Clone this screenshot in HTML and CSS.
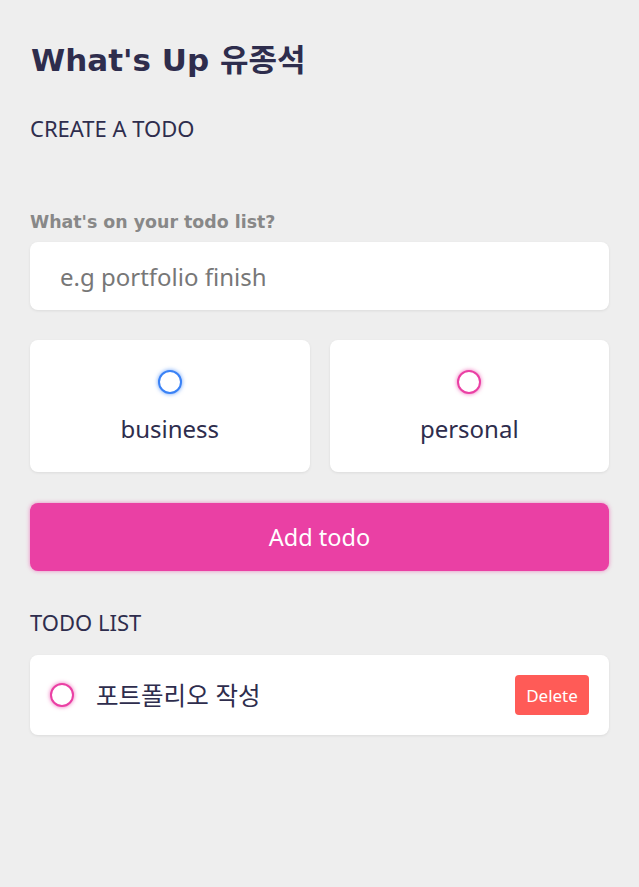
FILE: index.html
```html
<!DOCTYPE html>
<html lang="ko">
<head>
<meta charset="utf-8">
<title>What's Up</title>
<link rel="stylesheet" href="styles.css">
</head>
<body>
<main class="app">
  <h1 class="greeting">What's Up 유종석</h1>

  <section class="create">
    <h3 class="section-title">CREATE A TODO</h3>
    <form class="todo-form" onsubmit="return false">
      <label class="field-label" for="content">What's on your todo list?</label>
      <input class="todo-input" id="content" type="text" placeholder="e.g portfolio finish">

      <div class="options">
        <label class="option">
          <span class="bubble bubble-business"></span>
          <span class="option-text">business</span>
        </label>
        <label class="option">
          <span class="bubble bubble-personal"></span>
          <span class="option-text">personal</span>
        </label>
      </div>

      <button class="add-btn" type="submit">Add todo</button>
    </form>
  </section>

  <section class="list">
    <h3 class="section-title list-title">TODO LIST</h3>
    <div class="todo-item">
      <span class="bubble bubble-personal"></span>
      <span class="todo-text">포트폴리오 작성</span>
      <button class="delete-btn" type="button">Delete</button>
    </div>
  </section>
</main>
</body>
</html>
```

FILE: styles.css
```css
* {
  box-sizing: border-box;
}

html, body {
  margin: 0;
  padding: 0;
  background: #eeeeee;
}

body {
  font-family: "Noto Sans", "Noto Sans CJK KR", sans-serif;
  color: #2e2d4d;
}

.app {
  padding: 30px 30px 30px 30px;
}

.greeting {
  margin: 12px 0 0 1px;
  font-family: "DejaVu Sans", "Noto Sans CJK KR", sans-serif;
  font-weight: 700;
  font-size: 31px;
  line-height: 36px;
  color: #2e2d4d;
}

.section-title {
  margin: 37px 0 0 0;
  font-weight: 400;
  font-size: 22px;
  line-height: 26px;
  color: #2e2d4d;
}

.todo-form {
  display: flex;
  flex-direction: column;
}

.field-label {
  margin-top: 71px;
  font-family: "DejaVu Sans", sans-serif;
  font-weight: 700;
  font-size: 17.4px;
  line-height: 20px;
  color: #888888;
}

.todo-input {
  margin-top: 10px;
  height: 68px;
  padding: 0 30px;
  border: none;
  border-radius: 8px;
  background: #ffffff;
  box-shadow: 0 1px 3px rgba(0, 0, 0, 0.08);
  font-family: "Noto Sans", sans-serif;
  font-size: 24px;
  color: #2e2d4d;
  outline: none;
}

.todo-input::placeholder {
  color: #777777;
}

.options {
  margin-top: 30px;
  display: grid;
  grid-template-columns: 1fr 1fr;
  gap: 20px;
}

.option {
  display: flex;
  flex-direction: column;
  align-items: center;
  gap: 20px;
  padding: 30px 0 28px;
  background: #ffffff;
  border-radius: 8px;
  box-shadow: 0 1px 3px rgba(0, 0, 0, 0.08);
}

.bubble {
  display: block;
  flex: none;
  width: 24px;
  height: 24px;
  border-radius: 50%;
  border: 2px solid;
  background: #ffffff;
}

.bubble-business {
  border-color: #3a82f6;
  box-shadow: 0 0 4px rgba(58, 130, 246, 0.75);
}

.bubble-personal {
  border-color: #ea40a4;
  box-shadow: 0 0 4px rgba(234, 64, 164, 0.75);
}

.option-text {
  font-size: 24px;
  line-height: 30px;
  color: #2e2d4d;
}

.add-btn {
  margin-top: 31px;
  height: 68px;
  border: none;
  border-radius: 8px;
  background: #ea40a4;
  box-shadow: 0 0 4px rgba(234, 64, 164, 0.6);
  font-family: "Noto Sans", sans-serif;
  font-size: 23.5px;
  color: #ffffff;
}

.list-title {
  margin-top: 38px;
}

.todo-item {
  margin-top: 20px;
  display: flex;
  align-items: center;
  padding: 20px;
  background: #ffffff;
  border-radius: 8px;
  box-shadow: 0 1px 3px rgba(0, 0, 0, 0.08);
}

.todo-text {
  flex: 1;
  margin-left: 22px;
  font-family: "Noto Sans CJK KR", sans-serif;
  font-size: 24.5px;
  line-height: 30px;
  color: #2e2d4d;
}

.delete-btn {
  width: 74px;
  height: 40px;
  padding: 0;
  border: none;
  border-radius: 4px;
  background: #ff5b57;
  font-family: "Noto Sans", sans-serif;
  font-size: 17px;
  color: #ffffff;
}
```
